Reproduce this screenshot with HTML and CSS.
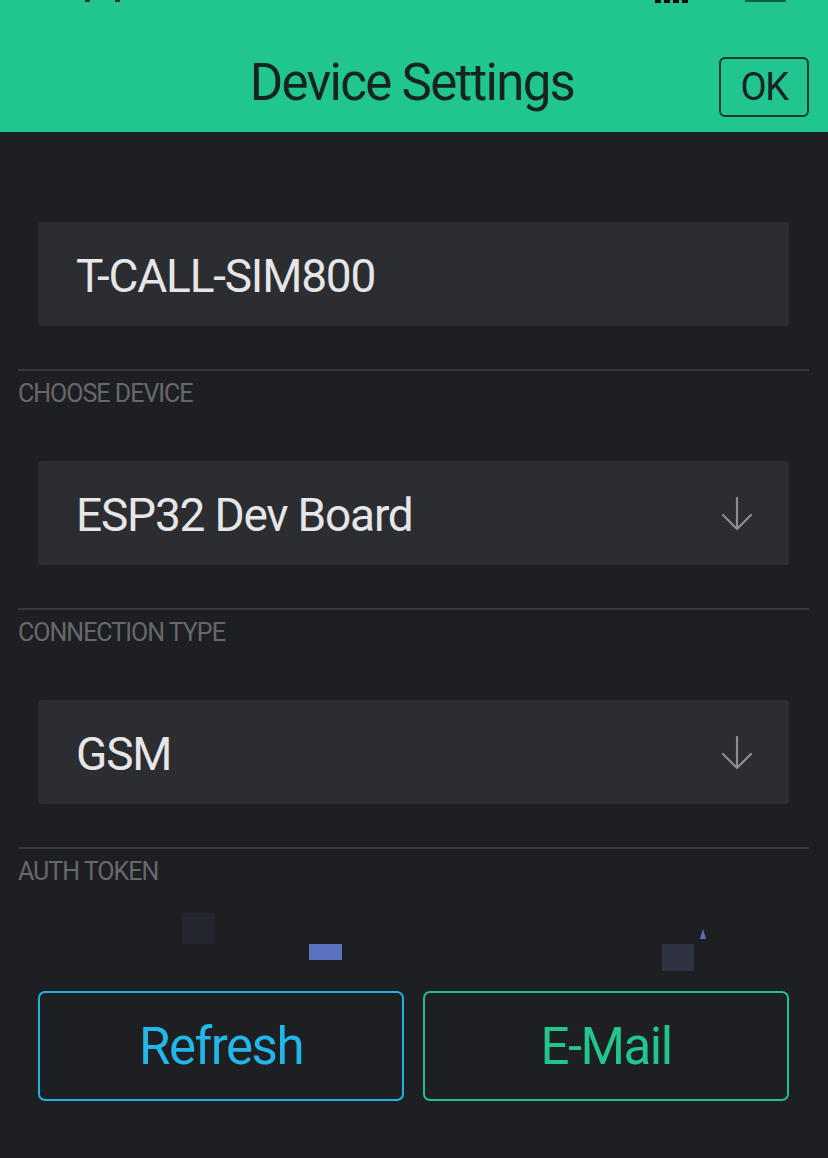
FILE: index.html
```html
<!DOCTYPE html>
<html>
<head>
<meta charset="utf-8">
<link rel="stylesheet" href="styles.css">
</head>
<body>
<div class="screen">
  <header class="topbar">
    <span class="sb sb-l1"></span><span class="sb sb-l2"></span>
    <span class="sb sb-dots"></span><span class="sb sb-bat"></span>
    <h1 class="title">Device Settings</h1>
    <button class="ok">OK</button>
  </header>
  <main class="content">
    <div class="box field"><span class="val">T-CALL-SIM800</span></div>
    <div class="group">
      <div class="label">CHOOSE DEVICE</div>
      <div class="box select"><span class="val">ESP32 Dev Board</span>
        <svg class="arrow" viewBox="0 0 32 34" width="32" height="34"><path d="M16 1 V32 M2 18 L16 32 L30 18" fill="none" stroke="#8c8d91" stroke-width="2.2" stroke-linecap="round" stroke-linejoin="round"/></svg>
      </div>
    </div>
    <div class="group">
      <div class="label">CONNECTION TYPE</div>
      <div class="box select"><span class="val">GSM</span>
        <svg class="arrow" viewBox="0 0 32 34" width="32" height="34"><path d="M16 1 V32 M2 18 L16 32 L30 18" fill="none" stroke="#8c8d91" stroke-width="2.2" stroke-linecap="round" stroke-linejoin="round"/></svg>
      </div>
    </div>
    <div class="group">
      <div class="label">AUTH TOKEN</div>
      <div class="token">
        <span class="blot b1"></span>
        <span class="blot b2"></span>
        <span class="blot b3"></span>
        <span class="blot b4"></span>
      </div>
    </div>
    <div class="actions">
      <button class="btn refresh">Refresh</button>
      <button class="btn email">E-Mail</button>
    </div>
  </main>
</div>
</body>
</html>
```
FILE: styles.css
```css
* { box-sizing: border-box; }
html, body { margin: 0; padding: 0; }
body {
  width: 828px;
  height: 1158px;
  background: #1e1f23;
  font-family: Roboto, "Liberation Sans", sans-serif;
  overflow: hidden;
}
.screen { width: 828px; height: 1158px; background: #1e1f23; }
.topbar {
  position: relative;
  height: 132px;
  background: #21c590;
  display: flex;
  align-items: center;
  justify-content: center;
}
.sb { position: absolute; top: 0; background: #123a2c; }
.sb-l1 { left: 85px; width: 5px; height: 2px; }
.sb-l2 { left: 115px; width: 5px; height: 2px; }
.sb-dots { left: 655px; width: 34px; height: 3px; background: repeating-linear-gradient(90deg, #0b0b0b 0 6px, transparent 6px 9px); }
.sb-bat { left: 745px; width: 41px; height: 2px; background: #0f5e44; }
.title {
  margin: 0;
  font-weight: 400;
  font-size: 51px;
  letter-spacing: -1.7px;
  color: #17231f;
  position: relative;
  top: 16px;
  left: -2px;
}
.ok {
  position: absolute;
  left: 719px;
  top: 57px;
  width: 90px;
  height: 60px;
  border: 2px solid #123a2e;
  border-radius: 6px;
  background: transparent;
  font-family: Roboto, "Liberation Sans", sans-serif;
  font-size: 38px;
  color: #17231f;
  padding: 0;
  letter-spacing: -1.5px;
}
.content { padding: 90px 19px 0 18px; }
.box {
  margin: 0 20px;
  height: 104px;
  background: #2c2d31;
  border-radius: 4px;
  display: flex;
  align-items: center;
  padding: 0 36px 0 38px;
}
.val {
  font-size: 46px;
  color: #e6e6e8;
  letter-spacing: -1.2px;
  position: relative;
  top: 2px;
}
.select { justify-content: space-between; }
.arrow { display: block; margin-top: 2px; }
.group {
  margin-top: 43px;
  border-top: 2px solid #37383c;
}
.label {
  margin: 8px 0 52px 0;
  font-size: 25px;
  line-height: 30px;
  color: #67686c;
  letter-spacing: -1px;
}
.token { position: relative; height: 61px; margin-top: -30px; }
.blot { position: absolute; }
.b1 { left: 164px; top: 4px; width: 33px; height: 31px; background: #23262d; }
.b2 { left: 291px; top: 35px; width: 33px; height: 16px; background: #5a72c0; }
.b3 { left: 644px; top: 35px; width: 32px; height: 27px; background: #2e3242; }
.b4 { left: 682px; top: 20px; width: 6px; height: 10px; background: #5a72c0; clip-path: polygon(50% 0, 100% 100%, 0 100%); }
.actions {
  margin: 21px 20px 0 20px;
  display: flex;
  gap: 19px;
}
.btn {
  flex: 1;
  height: 110px;
  background: transparent;
  border-radius: 7px;
  font-family: Roboto, "Liberation Sans", sans-serif;
  font-size: 51px;
  letter-spacing: -1.5px;
  padding: 0;
}
.refresh { border: 2px solid #1fb2e4; color: #22b6e9; }
.email { border: 2px solid #20c08c; color: #22c48f; }
```
